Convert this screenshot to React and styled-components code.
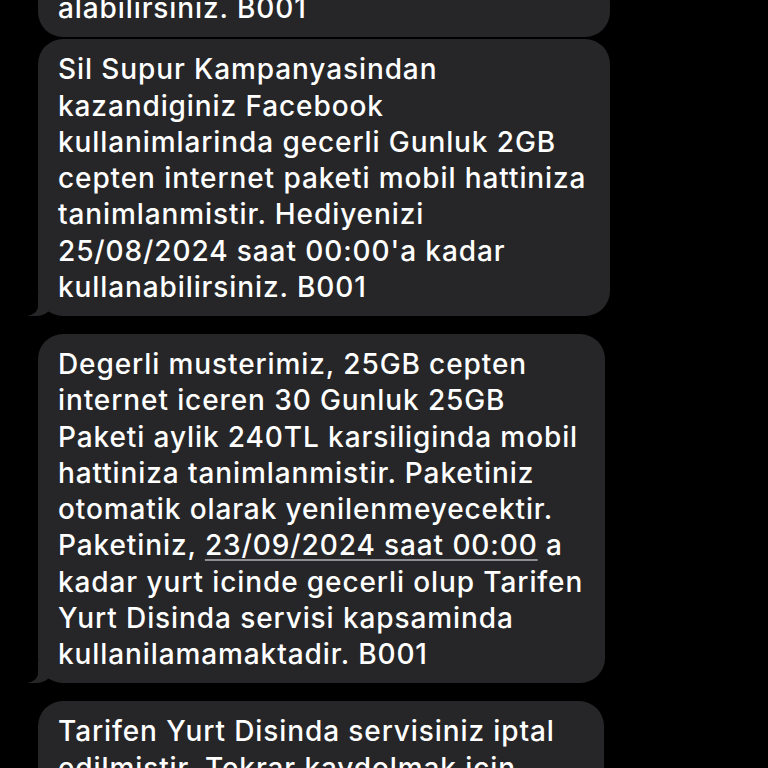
import styled, { createGlobalStyle } from "styled-components";

const GlobalStyle = createGlobalStyle`
  html, body {
    margin: 0;
    padding: 0;
    background: #000;
  }
  body {
    font-family: Inter, "Noto Sans", "Liberation Sans", sans-serif;
    -webkit-font-smoothing: antialiased;
  }
`;

const messages = [
  {
    width: 572,
    tail: false,
    lines: ["alabilirsiniz. B001"],
  },
  {
    width: 572,
    tail: true,
    lines: [
      "Sil Supur Kampanyasindan",
      "kazandiginiz Facebook",
      "kullanimlarinda gecerli Gunluk 2GB",
      "cepten internet paketi mobil hattiniza",
      "tanimlanmistir. Hediyenizi",
      "25/08/2024 saat 00:00'a kadar",
      "kullanabilirsiniz. B001",
    ],
  },
  {
    width: 567,
    tail: true,
    lines: [
      "Degerli musterimiz, 25GB cepten",
      "internet iceren 30 Gunluk 25GB",
      "Paketi aylik 240TL karsiliginda mobil",
      "hattiniza tanimlanmistir. Paketiniz",
      "otomatik olarak yenilenmeyecektir.",
      ["Paketiniz, ", { link: "23/09/2024 saat 00:00" }, " a"],
      "kadar yurt icinde gecerli olup Tarifen",
      "Yurt Disinda servisi kapsaminda",
      "kullanilamamaktadir. B001",
    ],
  },
  {
    width: 566,
    tail: false,
    lines: [
      "Tarifen Yurt Disinda servisiniz iptal",
      "edilmistir. Tekrar kaydolmak icin",
      "Tarifen Yurt Disinda yazip 2222'ye",
    ],
  },
];

export default function App() {
  return (
    <>
      <GlobalStyle />
      <Thread>
        {messages.map((msg, i) => (
          <Bubble
            key={i}
            $width={msg.width}
            $tail={msg.tail}
            $grouped={i > 0 && !messages[i - 1].tail}
          >
            {msg.lines.map((line, j) => (
              <Line key={j}>
                {Array.isArray(line)
                  ? line.map((part, k) =>
                      typeof part === "string" ? (
                        part
                      ) : (
                        <DateLink key={k}>{part.link}</DateLink>
                      )
                    )
                  : line}
              </Line>
            ))}
          </Bubble>
        ))}
      </Thread>
    </>
  );
}

const Thread = styled.div`
  display: flex;
  flex-direction: column;
  align-items: flex-start;
  padding-left: 38px;
  margin-top: -22px;
  height: 790px;
  overflow: hidden;
`;

const Bubble = styled.div`
  position: relative;
  box-sizing: border-box;
  width: ${(p) => p.$width}px;
  margin-top: ${(p) => (p.$grouped ? "2px" : "18px")};
  &:first-child {
    margin-top: 0;
  }
  padding: 12px 14px 11px 20px;
  background: #262628;
  border-radius: 25px;
  color: #fff;
  font-size: 28px;
  font-weight: 500;
  line-height: 36.25px;
  letter-spacing: 0.9px;

  ${(p) =>
    p.$tail &&
    `
    &::before {
      content: "";
      position: absolute;
      bottom: 0;
      left: -10px;
      width: 26px;
      height: 22px;
      background: #262628;
      border-bottom-right-radius: 18px 16px;
    }
    &::after {
      content: "";
      position: absolute;
      bottom: 0;
      left: -26px;
      width: 26px;
      height: 24px;
      background: #000;
      border-bottom-right-radius: 12px 10px;
    }
  `}
`;

const Line = styled.div`
  white-space: nowrap;
`;

const DateLink = styled.span`
  text-decoration: underline;
  text-decoration-color: #8e8e93;
  text-decoration-thickness: 2px;
  text-underline-offset: 4px;
`;
